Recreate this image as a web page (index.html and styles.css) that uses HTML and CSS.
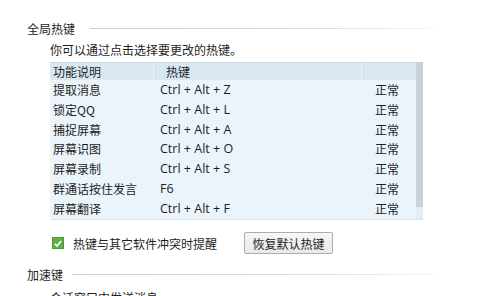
FILE: index.html
```html
<!DOCTYPE html>
<html lang="zh-CN">
<head>
<meta charset="utf-8">
<link rel="stylesheet" href="styles.css">
</head>
<body>
<div class="page">
  <div class="section-title"><span>全局热键</span><i class="rule"></i></div>
  <div class="hint">你可以通过点击选择要更改的热键。</div>
  <div class="table">
    <div class="list">
      <div class="row head">
        <div class="c1">功能说明</div>
        <div class="c2">热键</div>
        <div class="c3"></div>
      </div>
      <div class="row"><div class="c1">提取消息</div><div class="c2 key">Ctrl + Alt + Z</div><div class="c3">正常</div></div>
      <div class="row"><div class="c1">锁定QQ</div><div class="c2 key">Ctrl + Alt + L</div><div class="c3">正常</div></div>
      <div class="row"><div class="c1">捕捉屏幕</div><div class="c2 key">Ctrl + Alt + A</div><div class="c3">正常</div></div>
      <div class="row"><div class="c1">屏幕识图</div><div class="c2 key">Ctrl + Alt + O</div><div class="c3">正常</div></div>
      <div class="row"><div class="c1">屏幕录制</div><div class="c2 key">Ctrl + Alt + S</div><div class="c3">正常</div></div>
      <div class="row"><div class="c1">群通话按住发言</div><div class="c2 key">F6</div><div class="c3">正常</div></div>
      <div class="row"><div class="c1">屏幕翻译</div><div class="c2 key">Ctrl + Alt + F</div><div class="c3">正常</div></div>
    </div>
    <div class="scrollbar"><div class="thumb"></div></div>
  </div>
  <div class="actions">
    <label class="check">
      <span class="box"><svg width="11" height="11" viewBox="0 0 11 11"><path d="M2 5.8 L4.4 8.2 L9 2.8" fill="none" stroke="#fff" stroke-width="1.8"/></svg></span>
      <span>热键与其它软件冲突时提醒</span>
    </label>
    <button class="btn">恢复默认热键</button>
  </div>
  <div class="section-title second"><span>加速键</span><i class="rule"></i></div>
  <div class="hint cut">会话窗口中发送消息:</div>
</div>
</body>
</html>
```
FILE: styles.css
```css
html, body {
  margin: 0;
  padding: 0;
  background: #fff;
}
body {
  width: 485px;
  height: 296px;
  overflow: hidden;
  font-family: "Noto Sans CJK SC", "Open Sans", sans-serif;
  font-size: 12px;
  color: #1e1e1e;
}
.page {
  padding: 19px 0 0 27px;
}
.section-title {
  display: flex;
  align-items: center;
  height: 18px;
  width: 410px;
  gap: 15px;
}
.section-title .rule {
  flex: 1;
  height: 1px;
  background: linear-gradient(to right, #c9ced2, #dde1e4 70%, #f6f7f8);
}
.section-title.second {
  margin-top: 11px;
  gap: 9px;
}
.hint {
  margin: 4px 0 0 23px;
  height: 17px;
  line-height: 17px;
}
.hint.cut {
  margin-top: 6px;
}
.table {
  margin: 4px 0 0 23px;
  width: 373px;
  height: 158px;
  display: flex;
  background: #ebf4fb;
  border-bottom: 1px solid #d5e3ee;
  box-sizing: border-box;
}
.list {
  flex: 1;
  display: flex;
  flex-direction: column;
}
.row {
  display: flex;
  height: 19.8px;
  line-height: 19.8px;
}
.row.head {
  height: 18px;
  line-height: 18px;
  background: #d8e7f2;
  border-top: 1px solid #c8d8e5;
  box-sizing: border-box;
}
.head .c1, .head .c2 {
  border-right: 1px solid #eef5fa;
}
.head .c2 {
  padding-left: 12px;
}
.c1 {
  width: 104px;
  padding-left: 3px;
  box-sizing: border-box;
}
.c2 {
  width: 208px;
  padding-left: 6px;
  box-sizing: border-box;
}
.c3 {
  flex: 1;
  padding-left: 13px;
  box-sizing: border-box;
}
.key {
  font-family: "Open Sans", "Noto Sans", sans-serif;
  font-size: 12.5px;
}
.scrollbar {
  width: 7px;
  background: #e4edf3;
  display: flex;
  flex-direction: column;
}
.thumb {
  height: 145px;
  background: #c8d2da;
}
.actions {
  display: flex;
  align-items: center;
  margin: 12px 0 0 25px;
}
.check {
  display: flex;
  align-items: center;
  gap: 9px;
  width: 192px;
}
.box {
  width: 12px;
  height: 12px;
  background: #5fae4a;
  border: 1px solid #4b9a38;
  box-sizing: border-box;
  display: flex;
  align-items: center;
  justify-content: center;
}
.btn {
  font-family: "Noto Sans CJK SC", sans-serif;
  font-size: 12px;
  color: #1e1e1e;
  height: 22px;
  width: 89px;
  padding: 0;
  background: linear-gradient(#f7f7f7, #e9e9e9);
  border: 1px solid #adadad;
  border-radius: 2px;
}
```
